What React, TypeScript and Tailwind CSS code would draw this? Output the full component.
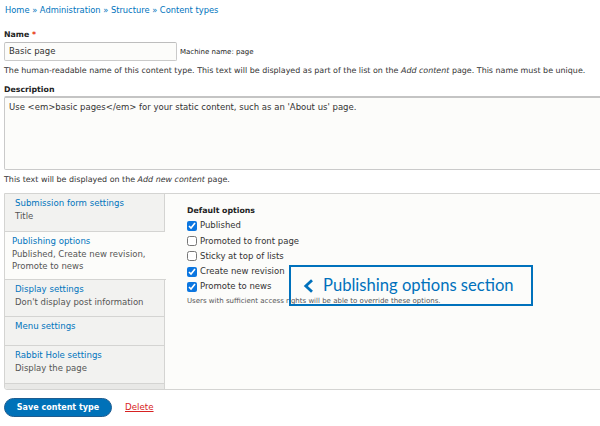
import React from "react";

const font = { fontFamily: '"DejaVu Sans", Verdana, sans-serif' };

function Check({ checked, label }: { checked: boolean; label: string }) {
  return (
    <div className="flex items-center gap-[3px] h-[15.3px]">
      <input
        type="checkbox"
        defaultChecked={checked}
        className="w-[10px] h-[10px] m-0 accent-[#0b76e0]"
      />
      <span className="text-[8.5px] text-[#333]">{label}</span>
    </div>
  );
}

function Tab({
  title,
  summary,
  h,
  selected,
}: {
  title: string;
  summary?: string[];
  h: string;
  selected?: boolean;
}) {
  return (
    <div
      className={
        selected
          ? `${h} bg-[#fcfcfa] border-b border-[#d4d4d2] pl-[7px] pt-[3px] -mr-px relative z-10`
          : `${h} bg-[#f2f2f0] border-b border-[#d4d4d2] border-r border-r-[#d4d4d2] pl-[10px] pt-[3px]`
      }
    >
      <div className="text-[8.6px] leading-[13px] text-[#0074bd]">{title}</div>
      {summary?.map((s) => (
        <div key={s} className="text-[8.5px] leading-[12px] text-[#555]">
          {s}
        </div>
      ))}
    </div>
  );
}

export default function App() {
  return (
    <div className="w-[600px] h-[426px] overflow-hidden bg-white relative" style={font}>
      <div className="w-[640px] pl-[4px] pt-[3px]">
        <div className="text-[8.3px] leading-[12px] text-[#0074bd] pl-[1px] pt-[1px]">
          Home » Administration » Structure » Content types
        </div>

        <div className="mt-[13px] text-[7.8px] leading-[12px] font-bold text-[#222]">
          Name <span className="text-[#e62600]">*</span>
        </div>
        <div className="flex items-center mt-[1px]">
          <div className="w-[173px] h-[19px] border border-[#cacaca] border-t-[#bdbdbd] rounded-[2px] bg-[#fcfcfa] flex items-center pl-[4px] text-[8.5px] text-[#333]">
            Basic page
          </div>
          <div className="ml-[3px] text-[7px] text-[#222] mt-[2px]">Machine name: page</div>
        </div>
        <div className="mt-[4px] text-[7.95px] leading-[11px] text-[#333]">
          The human-readable name of this content type. This text will be displayed as part of the list on the{" "}
          <em>Add content</em> page. This name must be unique.
        </div>

        <div className="mt-[8px] text-[7.8px] leading-[12px] font-bold text-[#222]">Description</div>
        <div className="h-[74px] border border-[#cacaca] border-t-2 border-t-[#c4c4c4] rounded-[2px] bg-[#fcfcfa] pl-[4px] pt-[3px] text-[8.5px] text-[#333]">
          Use &lt;em&gt;basic pages&lt;/em&gt; for your static content, such as an 'About us' page.
        </div>
        <div className="mt-[4px] text-[7.95px] leading-[11px] text-[#333]">
          This text will be displayed on the <em>Add new content</em> page.
        </div>

        <div className="mt-[8px] flex border border-[#d4d4d2] rounded-bl-[3px] h-[197px] w-[620px] bg-[#fcfcfa]">
          <div className="w-[160px] flex flex-col bg-[#e8e8e6] rounded-bl-[3px]">
            <Tab h="h-[38px]" title="Submission form settings" summary={["Title"]} />
            <Tab
              h="h-[48px]"
              selected
              title="Publishing options"
              summary={["Published, Create new revision,", "Promote to news"]}
            />
            <Tab h="h-[37px]" title="Display settings" summary={["Don't display post information"]} />
            <Tab h="h-[29px]" title="Menu settings" />
            <Tab h="h-[38px]" title="Rabbit Hole settings" summary={["Display the page"]} />
            <div className="flex-1 border-r border-[#d4d4d2]" />
          </div>
          <div className="flex-1 pl-[22px] pt-[11px] bg-[#fcfcfa]">
            <div className="text-[7.8px] leading-[12px] font-bold text-[#222] mb-[1px]">Default options</div>
            <Check checked label="Published" />
            <Check checked={false} label="Promoted to front page" />
            <Check checked={false} label="Sticky at top of lists" />
            <Check checked label="Create new revision" />
            <Check checked label="Promote to news" />
            <div className="mt-[2px] text-[7px] leading-[10px] text-[#555]">
              Users with sufficient access rights will be able to override these options.
            </div>
          </div>
        </div>

        <div className="mt-[8px] flex items-center">
          <div className="w-[108px] h-[19px] rounded-full bg-[#0071b8] border border-[#1e5c90] text-white text-[8px] font-bold flex items-center justify-center">
            Save content type
          </div>
          <div className="ml-[13px] text-[8.7px] text-[#d72222] underline">Delete</div>
        </div>
      </div>

      <div className="absolute left-[289px] top-[265px] w-[244px] h-[41px] border-2 border-[#0071bc] flex items-center">
        <svg width="11" height="14" viewBox="0 0 11 14" className="ml-[12px]">
          <path d="M9 1.2 L2.8 7 L9 12.8" fill="none" stroke="#0071bc" strokeWidth="2.8" />
        </svg>
        <span
          className="ml-[9px] text-[16.6px] text-[#0071bc]"
          style={{ fontFamily: 'Lato, "Open Sans", sans-serif' }}
        >
          Publishing options section
        </span>
      </div>
    </div>
  );
}
